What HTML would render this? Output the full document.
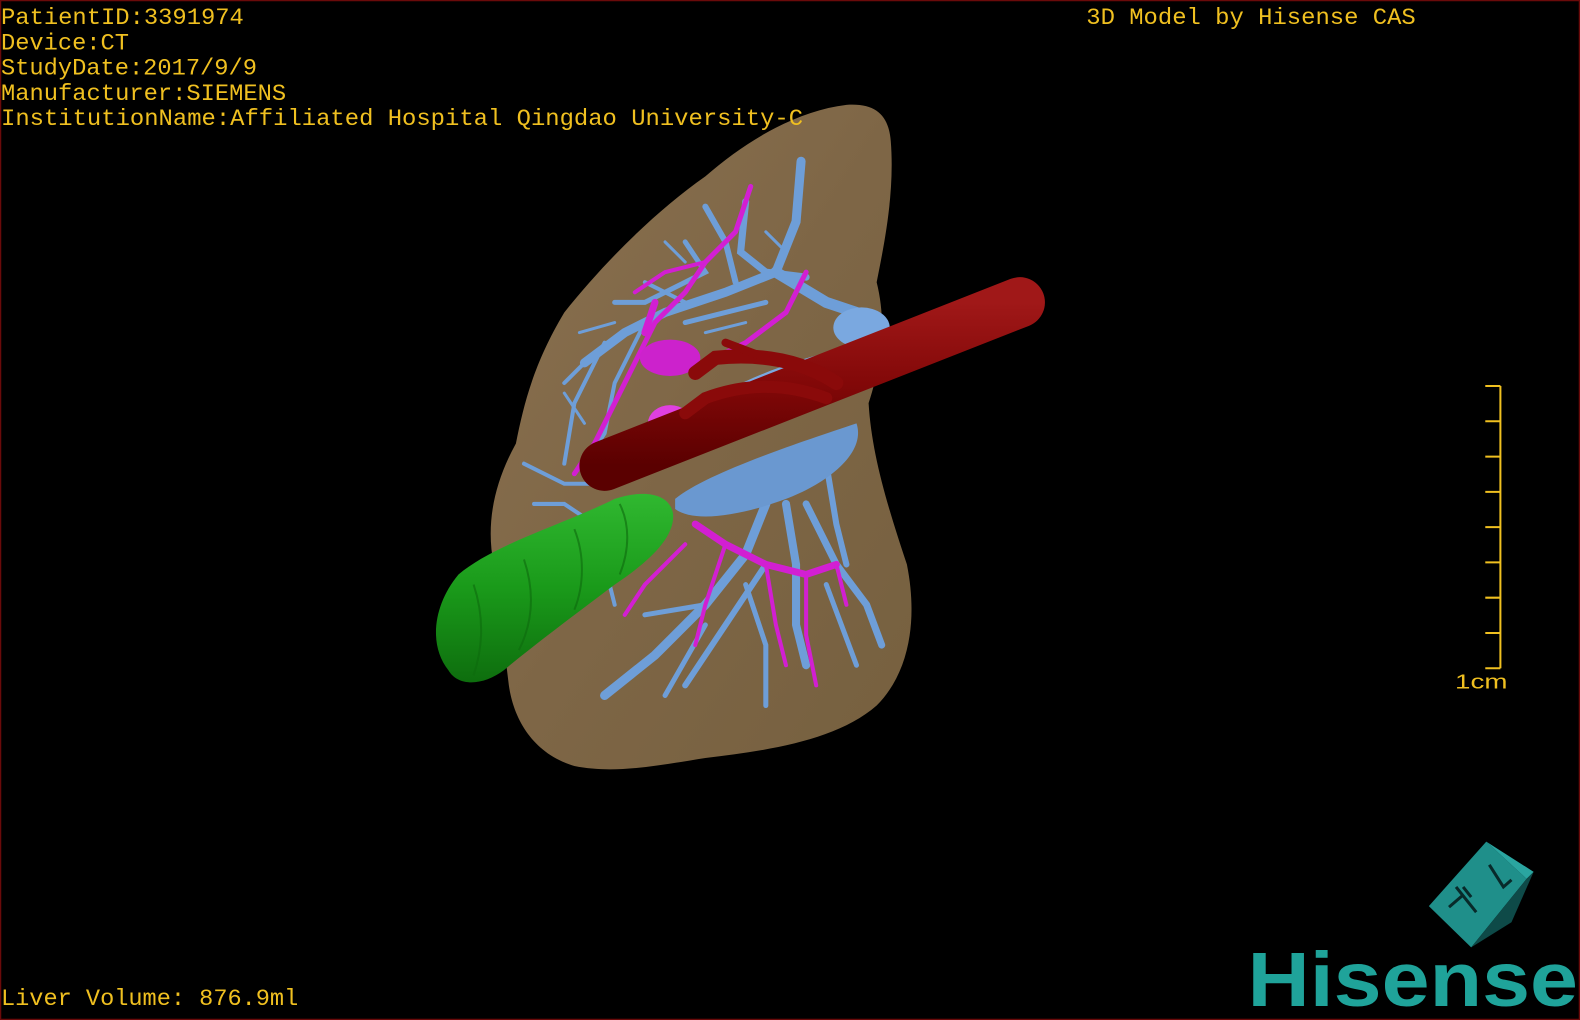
<!DOCTYPE html>
<html><head><meta charset="utf-8"><style>
html,body{margin:0;padding:0;background:#000;width:1580px;height:1020px;overflow:hidden}
svg{display:block}
</style></head><body>
<svg width="1580" height="1020" viewBox="0 0 1568 1012" preserveAspectRatio="none" xmlns="http://www.w3.org/2000/svg">
<defs>
<linearGradient id="liv" x1="0" y1="0" x2="1" y2="1">
<stop offset="0" stop-color="#8a7150"/><stop offset="0.5" stop-color="#7e6646"/><stop offset="1" stop-color="#76603f"/>
</linearGradient>
<linearGradient id="red" x1="0" y1="0" x2="0" y2="1">
<stop offset="0" stop-color="#a01818"/><stop offset="0.5" stop-color="#820808"/><stop offset="1" stop-color="#5a0000"/>
</linearGradient>
<linearGradient id="grn" x1="0" y1="0" x2="0" y2="1">
<stop offset="0" stop-color="#30b830"/><stop offset="0.5" stop-color="#1a9a1a"/><stop offset="1" stop-color="#0e6e0e"/>
</linearGradient>
</defs>
<rect x="0" y="0" width="1568" height="1012" fill="#000"/>
<rect x="0.5" y="0.5" width="1567" height="1011" fill="none" stroke="#6a0a0a" stroke-width="1.5"/>

<path d="M700,175 C740,140 790,110 840,104 C870,102 882,115 884,140 C888,190 878,240 870,280 C880,320 875,360 862,400 C865,450 880,500 900,560 C912,620 900,670 870,700 C830,735 760,745 700,752 C650,760 610,768 570,760 C530,748 510,715 505,680 C500,640 495,590 490,560 C482,520 490,480 512,440 C520,400 530,360 560,310 C600,260 650,210 700,175 Z" fill="url(#liv)"/>

<g stroke="#6e9ed8" fill="none" stroke-linecap="round">
<path d="M795,160 L790,220 L770,270 L720,290 L660,310 L620,330 L580,360" stroke-width="9"/>
<path d="M740,200 L735,250 L760,270 L800,275" stroke-width="7"/>
<path d="M700,205 L720,240 L730,280" stroke-width="6"/>
<path d="M680,240 L700,270 L640,300 L610,300" stroke-width="5"/>
<path d="M640,280 L680,300" stroke-width="4"/>
<path d="M770,270 L820,300 L850,310" stroke-width="11"/>
<path d="M620,330 L590,350 L560,380 M600,340 L570,400 L560,460" stroke-width="4"/>
<path d="M640,320 L610,380 L600,430 L580,460" stroke-width="4"/>
<path d="M680,320 L720,310 L760,300" stroke-width="5"/>
<path d="M520,460 L560,480 L600,480" stroke-width="4"/>
<path d="M530,500 L560,500 L590,520" stroke-width="4"/>
<path d="M760,500 L740,550 L700,600 L650,650 L600,690" stroke-width="9"/>
<path d="M780,500 L790,560 L790,620 L800,660" stroke-width="8"/>
<path d="M800,500 L830,560 L860,600 L875,640" stroke-width="7"/>
<path d="M760,560 L720,620 L680,680" stroke-width="6"/>
<path d="M740,580 L760,640 L760,700" stroke-width="5"/>
<path d="M820,460 L830,520 L840,560" stroke-width="6"/>
<path d="M700,600 L640,610 M700,620 L660,690" stroke-width="5"/>
<path d="M620,520 L600,560 L610,600" stroke-width="4"/>
<path d="M820,580 L850,660" stroke-width="5"/>
<path d="M560,390 L580,420 M575,330 L610,320 M700,330 L740,320 M660,240 L680,260 M760,230 L780,250" stroke-width="3"/>
</g>
<ellipse cx="855" cy="325" rx="28" ry="20" fill="#7aa8e0"/>
<path d="M670,495 C700,470 790,440 850,420 C860,450 820,480 780,495 C740,510 690,520 670,505 Z" fill="#6a98d0"/>
<path d="M700,400 C730,380 780,360 820,350 C830,370 800,390 760,400 C730,410 710,420 700,410 Z" fill="#7aa8e0"/>

<g stroke="#d21fd2" fill="none" stroke-linecap="round">
<path d="M745,185 L730,230 L700,260 L680,290 L650,320 L630,360 L610,400 L590,440 L570,470" stroke-width="5"/>
<path d="M700,260 L660,270 L630,290" stroke-width="4"/>
<path d="M800,270 L780,310 L740,340 L700,360" stroke-width="5"/>
<path d="M690,520 L720,540 L760,560 L800,570 L830,560" stroke-width="7"/>
<path d="M720,540 L700,600 L690,640" stroke-width="4"/>
<path d="M760,560 L770,620 L780,660" stroke-width="4"/>
<path d="M800,570 L800,630 L810,680" stroke-width="4"/>
<path d="M830,560 L840,600 M680,540 L640,580 L620,610" stroke-width="4"/>
<path d="M650,300 L640,330" stroke-width="7"/>
</g>
<ellipse cx="665" cy="355" rx="30" ry="18" fill="#cc22cc"/>
<ellipse cx="665" cy="420" rx="22" ry="18" fill="#e040e0"/>

<path d="M600,462 L1012,300" stroke="url(#red)" stroke-width="50" stroke-linecap="round" fill="none"/>
<path d="M830,380 C800,360 760,350 710,355 L690,370" stroke="#8a0a0a" stroke-width="14" fill="none" stroke-linecap="round"/>
<path d="M820,395 C780,380 740,380 700,395 L680,410" stroke="#8a0a0a" stroke-width="12" fill="none" stroke-linecap="round"/>
<path d="M760,355 L720,340" stroke="#8a0a0a" stroke-width="8" fill="none" stroke-linecap="round"/>

<path d="M445,665 C425,640 430,600 455,570 C490,540 560,520 610,495 C640,485 665,490 668,510 C670,535 640,560 610,580 C570,610 530,640 500,665 C480,680 455,682 445,665 Z" fill="url(#grn)"/>
<g stroke="#0e6a0e" stroke-width="2" fill="none" opacity="0.6">
<path d="M470,580 C480,610 480,640 470,670"/><path d="M520,555 C530,585 530,615 515,645"/><path d="M570,525 C580,550 580,580 570,605"/><path d="M615,500 C625,520 625,545 615,570"/>
</g>

<g font-family="'Liberation Mono',monospace" font-size="23" fill="#f0c020">
<text x="1" y="24" textLength="241" lengthAdjust="spacingAndGlyphs">PatientID:3391974</text>
<text x="1" y="49" textLength="127" lengthAdjust="spacingAndGlyphs">Device:CT</text>
<text x="1" y="74" textLength="254" lengthAdjust="spacingAndGlyphs">StudyDate:2017/9/9</text>
<text x="1" y="99" textLength="283" lengthAdjust="spacingAndGlyphs">Manufacturer:SIEMENS</text>
<text x="1" y="124" textLength="796" lengthAdjust="spacingAndGlyphs">InstitutionName:Affiliated Hospital Qingdao University-C</text>
<text x="1078" y="24" textLength="327" lengthAdjust="spacingAndGlyphs">3D Model by Hisense CAS</text>
<text x="1" y="997" textLength="295" lengthAdjust="spacingAndGlyphs">Liver Volume: 876.9ml</text>
<text x="1444" y="683" font-family="'Liberation Sans',sans-serif" font-size="20" textLength="52" lengthAdjust="spacingAndGlyphs">1cm</text>
</g>

<g stroke="#f0c020" stroke-width="2" fill="none">
<path d="M1489,383 L1489,663"/>
<path d="M1474,383 L1489,383 M1474,418 L1489,418 M1474,453 L1489,453 M1474,488 L1489,488 M1474,523 L1489,523 M1474,558 L1489,558 M1474,593 L1489,593 M1474,628 L1489,628 M1474,663 L1489,663"/>
</g>

<g>
<polygon points="1418,899 1475,835 1515,872 1460,940" fill="#1f8f8a"/>
<polygon points="1475,835 1522,865 1515,872" fill="#2aa5a0"/>
<polygon points="1515,872 1522,865 1500,915 1460,940" fill="#0e4a48"/>
<path d="M1438,900 L1452,888 M1445,880 L1465,905 M1452,880 L1460,890" stroke="#082a2a" stroke-width="3" fill="none"/>
<path d="M1478,858 L1492,880 L1500,873" stroke="#082a2a" stroke-width="3" fill="none"/>
</g>
<text x="1238" y="998" font-family="'Liberation Sans',sans-serif" font-weight="bold" font-size="76" fill="#1fa39a" textLength="328" lengthAdjust="spacingAndGlyphs">Hisense</text>
</svg>
</body></html>
